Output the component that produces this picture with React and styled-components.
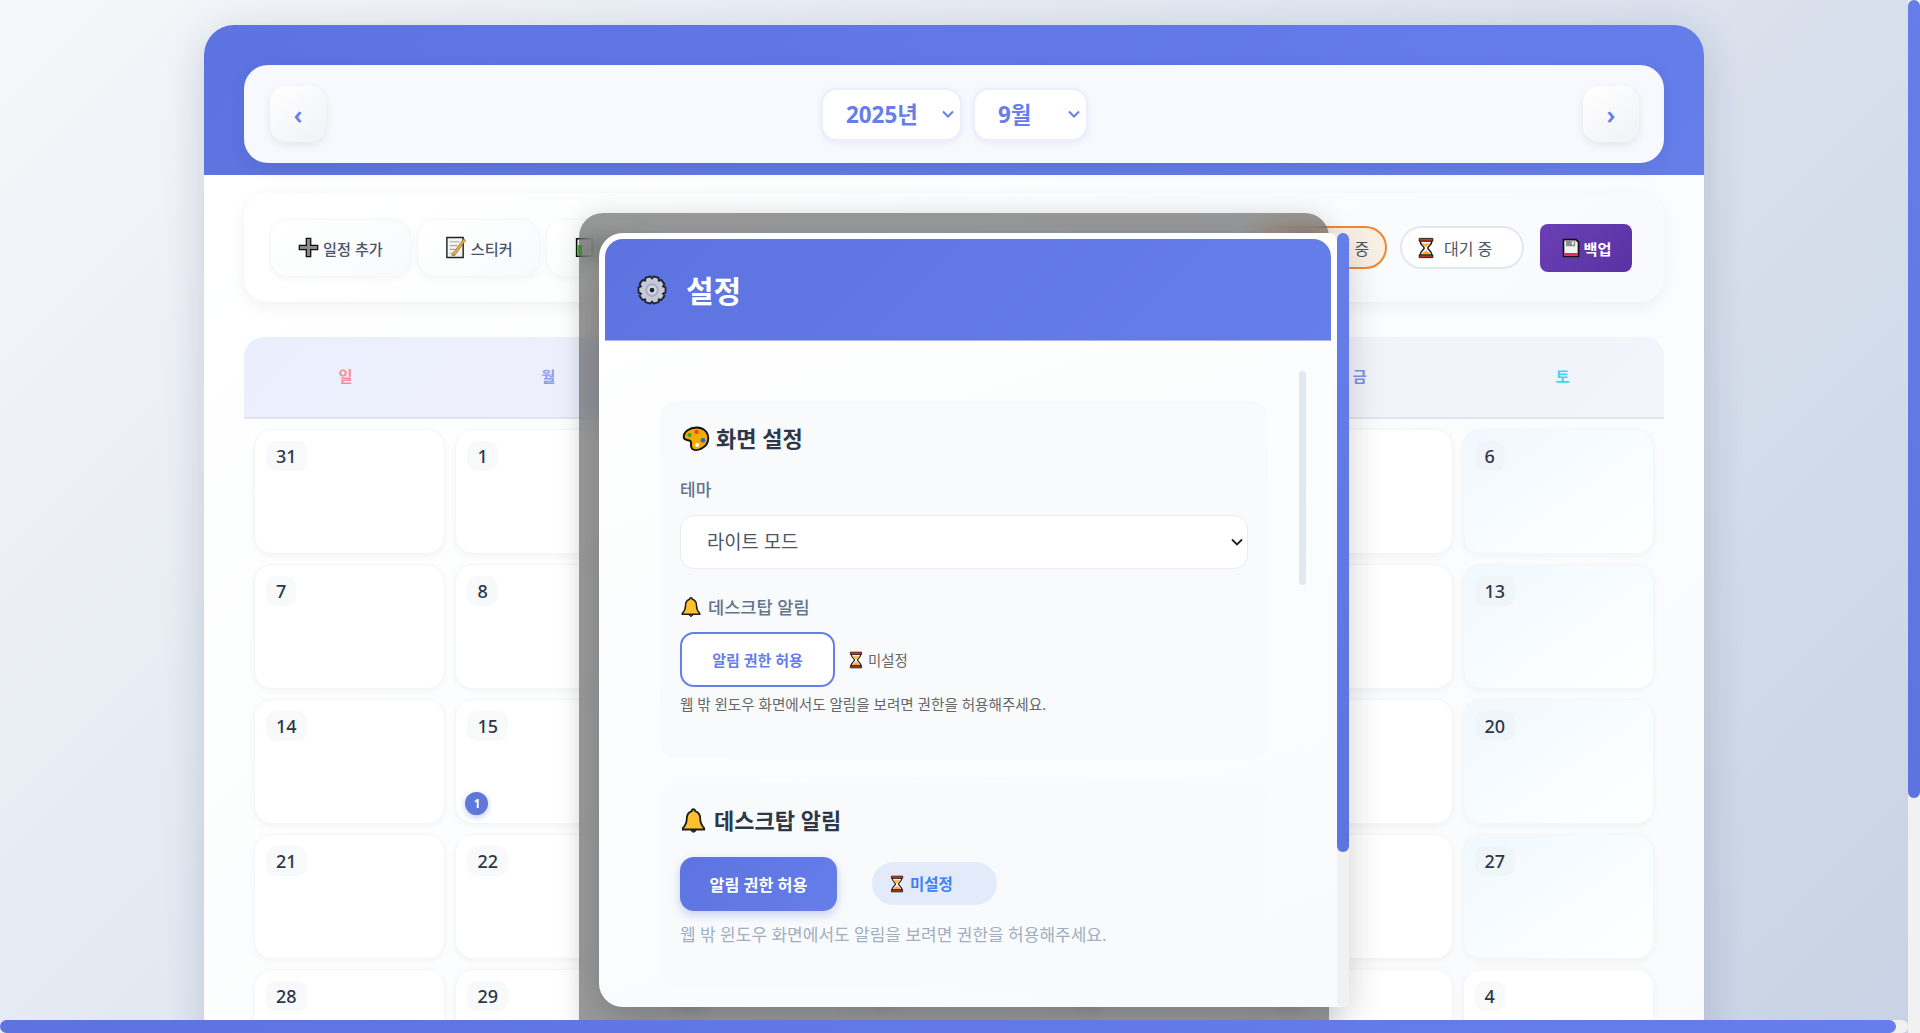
import React from "react";
import styled, { createGlobalStyle } from "styled-components";

const GlobalStyle = createGlobalStyle`
  html, body {
    margin: 0;
    overflow: hidden;
  }

  body {
    font-family: "Noto Sans", "Noto Sans CJK KR", sans-serif;
    color: #2d3748;
  }
`;

const chevron = (color, weight) =>
  `url("data:image/svg+xml,%3Csvg xmlns='http://www.w3.org/2000/svg' viewBox='0 0 12 8'%3E%3Cpath d='M1 1.500l5 5 5-5' fill='none' stroke='${color}' stroke-width='${weight}'/%3E%3C/svg%3E")`;

const Root = styled.div`
  position: relative;
  width: 1920px;
  height: 1033px;
  overflow: hidden;
  background: #f1f1f1;
`;

const Page = styled.div`
  position: relative;
  width: 1908px;
  height: 1304px;
  box-sizing: border-box;
  padding-top: 25px;
  background: linear-gradient(135deg, #f5f7fa 0%, #c3cfe2 100%);
`;

const Container = styled.div`
  width: 1500px;
  height: 100%;
  margin: 0 auto;
  border-radius: 30px 30px 0 0;
  overflow: hidden;
  background: linear-gradient(135deg, #ffffff, #f8fafc);
  box-shadow: 0 10px 40px rgba(30, 41, 80, 0.18);
`;

const Header = styled.header`
  height: 150px;
  box-sizing: border-box;
  padding: 40px 40px 12px;
  background: linear-gradient(135deg, #5c73e0, #667eea);
`;

const HeaderPanel = styled.div`
  height: 98px;
  box-sizing: border-box;
  padding: 0 25px 0 26px;
  display: flex;
  align-items: center;
  justify-content: space-between;
  border-radius: 24px;
  background: #f8f9fe;
  box-shadow: 0 4px 16px rgba(40, 50, 120, 0.12);
`;

const NavButton = styled.button`
  width: 56px;
  height: 56px;
  border: 0;
  border-radius: 16px;
  padding: 0;
  font-family: "Noto Sans", sans-serif;
  font-size: 26px;
  font-weight: 600;
  color: #667eea;
  background: linear-gradient(145deg, #ffffff, #f1f2f5);
  box-shadow: 0 3px 8px rgba(0, 0, 0, 0.08);
`;

const DatePickers = styled.div`
  display: flex;
  gap: 11px;
`;

const DateSelect = styled.select`
  appearance: none;
  width: ${(p) => p.$width}px;
  height: 53px;
  box-sizing: border-box;
  padding: 0 4px 0 23px;
  border: 2px solid #eceefb;
  border-radius: 16px;
  background: #fff ${chevron("%23667eea", 2)} no-repeat right 6px center / 12px 8px;
  font-family: inherit;
  font-size: 22.4px;
  font-weight: 700;
  color: #667eea;
  box-shadow: 0 2px 6px rgba(102, 126, 234, 0.12);
`;

const Content = styled.main`
  padding: 18px 40px 0;
`;

const Toolbar = styled.div`
  height: 109px;
  box-sizing: border-box;
  padding: 0 32px 0 26px;
  display: flex;
  align-items: center;
  border-radius: 24px;
  background: linear-gradient(135deg, #ffffff, #f8fafc);
  box-shadow: 0 4px 16px rgba(0, 0, 0, 0.06);
`;

const ToolGroup = styled.div`
  display: flex;
  gap: 6px;
`;

const ToolButton = styled.button`
  height: 58px;
  padding: 0 ${(p) => p.$padding}px;
  display: flex;
  align-items: center;
  gap: 4px;
  border: 1px solid #f5f6f7;
  border-radius: 18px;
  background: linear-gradient(145deg, #ffffff, #f8fafb);
  font-family: inherit;
  font-size: 15.2px;
  font-weight: 500;
  color: #4a5568;
  box-shadow: 0 2px 6px rgba(0, 0, 0, 0.04);
`;

const StatusGroup = styled.div`
  margin-left: auto;
  display: flex;
  align-items: center;
  gap: 13px;
`;

const StatusPill = styled.div`
  width: ${(p) => p.$width}px;
  height: 43px;
  box-sizing: border-box;
  padding-left: ${(p) => p.$padding}px;
  display: flex;
  align-items: center;
  gap: 7px;
  border: 2px solid ${(p) => (p.$active ? "#ed8936" : "#e2e8f0")};
  border-radius: 22px;
  background: ${(p) => (p.$active ? "#f9efe2" : "#fff")};
  font-size: 16px;
  color: #4a5568;
`;

const BackupButton = styled.button`
  width: 92px;
  height: 48px;
  margin-left: 3px;
  display: flex;
  align-items: center;
  justify-content: center;
  gap: 3px;
  padding: 0;
  border: 0;
  border-radius: 8px;
  background: linear-gradient(135deg, #6b3fb5, #5a32a3);
  font-family: inherit;
  font-size: 15.2px;
  font-weight: 700;
  color: #fff;
`;

const Calendar = styled.section`
  margin-top: 35px;
`;

const WeekHeader = styled.div`
  height: 82px;
  padding-bottom: 4px;
  box-sizing: border-box;
  display: grid;
  grid-template-columns: repeat(7, 1fr);
  align-items: center;
  border-radius: 20px 20px 0 0;
  border-bottom: 2px solid #e2e4ec;
  background: linear-gradient(135deg, #ebeefc, #f4f5fb);
`;

const WeekDay = styled.div`
  text-align: center;
  font-size: 15.2px;
  font-weight: 600;
  color: ${(p) => p.$color};
`;

const DayGrid = styled.div`
  padding: 10px;
  display: grid;
  grid-template-columns: repeat(7, 1fr);
  grid-auto-rows: 125px;
  gap: 10px;
`;

const DayCell = styled.div`
  position: relative;
  box-sizing: border-box;
  padding: 11px;
  border: 1px solid #f5f6f7;
  border-radius: 18px;
  background: ${(p) =>
    p.$weekend ? "linear-gradient(145deg, #f0f9ff, #ffffff)" : "#fff"};
  box-shadow: 0 2px 6px rgba(0, 0, 0, 0.04);
`;

const DayNumber = styled.span`
  display: inline-block;
  height: 30px;
  padding: 0 10px;
  border-radius: 10px;
  background: ${(p) => (p.$weekend ? "#f0f5fa" : "#f8f9fa")};
  font-size: 18px;
  font-weight: 500;
  line-height: 30px;
  color: #2d3748;
`;

const EventBadge = styled.span`
  position: absolute;
  left: 9px;
  bottom: 8px;
  width: 23px;
  height: 23px;
  display: flex;
  align-items: center;
  justify-content: center;
  border-radius: 50%;
  background: #5f77d8;
  font-size: 11.5px;
  font-weight: 700;
  color: #fff;
  box-shadow: 0 2px 6px rgba(95, 119, 216, 0.4);
`;

const Backdrop = styled.div`
  position: absolute;
  top: 213px;
  left: 50%;
  width: 750px;
  height: 900px;
  margin-left: -375px;
  border-radius: 24px;
  background: rgba(0, 0, 0, 0.4);
  backdrop-filter: blur(10px);
  box-shadow: 0 0 24px rgba(0, 0, 0, 0.12);
`;

const Modal = styled.div`
  position: absolute;
  top: 20px;
  left: 20px;
  width: 750px;
  height: 774px;
  display: flex;
  border-radius: 24px 6px 6px 24px;
  box-shadow: 0 12px 36px rgba(0, 0, 0, 0.18);
`;

const ModalPanel = styled.div`
  flex: 1;
  min-width: 0;
  padding: 6px 6px 0;
  overflow: hidden;
  border-radius: 24px 8px 0 24px;
  background: linear-gradient(160deg, #ffffff, #f8fafc);
`;

const ScrollTrack = styled.div`
  flex: none;
  width: 12px;
  height: 100%;
  border-radius: 6px;
  background: #f1f1f1;
`;

const ScrollThumb = styled.div`
  width: 100%;
  height: ${(p) => p.$length}px;
  border-radius: 6px;
  background: linear-gradient(135deg, #667eea, #5c73e0);
`;

const PageScrollY = styled.div`
  position: absolute;
  top: 0;
  right: 0;
  width: 12px;
  height: 1020px;
  border-radius: 0 0 6px 6px;
  background: #f1f1f1;
`;

const PageScrollX = styled.div`
  position: absolute;
  left: 0;
  bottom: 0;
  width: 1908px;
  height: 13px;
  border-radius: 6px;
  background: #f1f1f1;
`;

const PageScrollXThumb = styled.div`
  width: 1896px;
  height: 100%;
  border-radius: 7px;
  background: linear-gradient(90deg, #5c73e0, #667eea);
`;

const ModalHeader = styled.div`
  height: 102px;
  box-sizing: border-box;
  padding: 0 0 2px 32px;
  display: flex;
  align-items: center;
  gap: 19px;
  border-radius: 18px 18px 0 0;
  border-bottom: 1px solid #a9b6f2;
  background: linear-gradient(135deg, #5c73e0, #667eea);
`;

const ModalTitle = styled.h2`
  margin: 0;
  font-size: 30px;
  font-weight: 700;
  color: #fff;
`;

const ModalBody = styled.div`
  position: relative;
  height: 794px;
  margin: 30px 25px 0;
  padding: 30px 38px 0 30px;
  box-sizing: border-box;
`;

const BodyThumb = styled.div`
  position: absolute;
  top: 0;
  right: 0;
  width: 7px;
  height: 214px;
  border-radius: 4px;
  background: #e2e8f0;
`;

const Section = styled.section`
  padding: ${(p) => p.$padding};
  margin-bottom: 25px;
  border-radius: 16px;
  background: #f8fafc;
`;

const SectionTitle = styled.h3`
  margin: 0 0 22px;
  display: flex;
  align-items: center;
  gap: ${(p) => p.$gap}px;
  font-size: 22px;
  font-weight: 600;
  line-height: 30px;
  color: #2d3748;
`;

const FieldLabel = styled.div`
  margin: ${(p) => p.$top}px 0 13px;
  display: flex;
  align-items: center;
  gap: 6px;
  font-size: ${(p) => p.$size}px;
  font-weight: 500;
  line-height: 24px;
  color: #64748b;
`;

const ThemeSelect = styled.select`
  appearance: none;
  width: 100%;
  height: 54px;
  padding: 0 8px 0 26px;
  box-sizing: border-box;
  border: 1px solid #e9edf3;
  border-radius: 14px;
  background: #fff ${chevron("%23222", 1.8)} no-repeat right 4px center / 12px 8px;
  font-family: inherit;
  font-size: 18.8px;
  color: #4a5568;
`;

const PermissionRow = styled.div`
  display: flex;
  align-items: center;
  gap: ${(p) => p.$gap}px;
`;

const OutlineButton = styled.button`
  width: 155px;
  height: 55px;
  padding: 0;
  border: 2px solid #667eea;
  border-radius: 14px;
  background: #fff;
  font-family: inherit;
  font-size: 15px;
  font-weight: 600;
  color: #667eea;
`;

const FilledButton = styled.button`
  width: 157px;
  height: 54px;
  padding: 0;
  border: 0;
  border-radius: 14px;
  background: linear-gradient(135deg, #5c73e0, #667eea);
  font-family: inherit;
  font-size: 16.2px;
  font-weight: 600;
  color: #fff;
  box-shadow: 0 4px 10px rgba(90, 111, 220, 0.3);
`;

const PlainStatus = styled.div`
  display: flex;
  align-items: center;
  gap: 3px;
  font-size: 14.4px;
  color: #666;
`;

const StatusBadge = styled.div`
  width: 125px;
  height: 43px;
  margin-top: -1px;
  box-sizing: border-box;
  padding-left: 16px;
  display: flex;
  align-items: center;
  gap: 4px;
  border-radius: 22px;
  background: #e3eaf9;
  font-size: 15.5px;
  font-weight: 600;
  color: #3b82f6;
`;

const HelpText = styled.p`
  margin: ${(p) => p.$top}px 0 0;
  font-size: ${(p) => p.$size}px;
  line-height: 22px;
  color: ${(p) => p.$color};
`;

const IconSlot = styled.span`
  display: flex;
  margin: ${(p) => p.$top || 0}px 0 0 ${(p) => p.$left || 0}px;
`;

const Svg = ({ size, children }) => (
  <svg width={size} height={size} viewBox="0 0 24 24" style={{ flex: "none" }}>
    {children}
  </svg>
);

const PlusIcon = () => (
  <Svg size={21}>
    <path
      d="M9.500 1.500h5v8h8v5h-8v8h-5v-8h-8v-5h8z"
      fill="#8a8a8a"
      stroke="#111"
      strokeWidth="1.500"
    />
  </Svg>
);

const MemoIcon = () => (
  <Svg size={23}>
    <path d="M3 1.500h17v21H3z" fill="#f4f4f2" stroke="#222" strokeWidth="1.500" />
    <path d="M6 6h10M6 10h8M6 14h6M6 18h4" stroke="#a8a8a8" strokeWidth="1.200" />
    <path d="M8 20 20.500 3l2 1.500L11 20.500z" fill="#f9b233" stroke="#444" strokeWidth="0.600" />
  </Svg>
);

const ChartIcon = () => (
  <Svg size={21}>
    <path d="M3 2h18v20H3z" fill="#f4f4f2" stroke="#111" strokeWidth="1.800" />
    <path d="M4.500 9h5v12h-5z" fill="#3fb52f" />
  </Svg>
);

const HourglassIcon = ({ size }) => (
  <Svg size={size}>
    <path d="M5.500 4h13c0 5-4.500 6-4.500 8s4.500 3 4.500 8h-13c0-5 4.500-6 4.500-8S5.500 9 5.500 4z" fill="#f4f1ea" stroke="#1a1a1a" strokeWidth="1.600" />
    <path d="M7.500 7h9c-1 2-3.500 3-4.500 4-1-1-3.500-2-4.500-4z" fill="#fbb732" />
    <path d="M7.500 19c.5-2 3-3 4.500-4 1.500 1 4 2 4.500 4z" fill="#f7a823" />
    <path d="M4.500 1.500h15v3h-15z" fill="#e2321c" stroke="#1a1a1a" strokeWidth="1" />
    <path d="M4.500 19.500h15v3h-15z" fill="#b5301e" stroke="#1a1a1a" strokeWidth="1" />
  </Svg>
);

const FloppyIcon = () => (
  <Svg size={20}>
    <path d="M3 2h15l3 3v17H3z" fill="#f2f2f2" stroke="#111" strokeWidth="2" />
    <path d="M6 3h11v7H6z" fill="#8c8c8c" />
    <path d="M13 4h2.500v4H13z" fill="#e8e8e8" />
    <path d="M4 18h16v3H4z" fill="#e0245e" />
  </Svg>
);

// toothed outline around the centre of a 24 box
const gearPath = () => {
  const pts = [];
  const teeth = 10;
  const step = (Math.PI * 2) / teeth;
  for (let i = 0; i < teeth; i++) {
    const a = i * step;
    [
      [9.2, -0.5],
      [11, -0.3],
      [11, 0.3],
      [9.2, 0.5],
    ].forEach(([r, k]) => {
      const t = a + k * step;
      pts.push(`${(12 + r * Math.cos(t)).toFixed(2)} ${(12 + r * Math.sin(t)).toFixed(2)}`);
    });
  }
  return `M${pts.join("L")}z`;
};

const GearIcon = () => (
  <Svg size={30}>
    <path d={gearPath()} fill="#c6cad8" stroke="#1f2433" strokeWidth="1.500" strokeLinejoin="round" />
    <circle cx="12" cy="12" r="5.500" fill="#a9aec2" />
    <circle cx="12" cy="12" r="3.800" fill="#d6d9e4" />
    <circle cx="12" cy="12" r="1.900" fill="#1f2433" />
  </Svg>
);

const PaletteIcon = () => (
  <Svg size={28}>
    <path
      d="M12.500 3C6.500 3 1.500 6.500 1.500 11c0 3.500 4 2.500 5.500 3.500 2 1.300-.5 4 1.500 6.500 1.500 1.800 5 1.800 8 .2 3.500-1.800 6-5.300 6-9C22.500 6.500 18 3 12.500 3z"
      fill="#f5ab00"
      stroke="#111"
      strokeWidth="1.700"
    />
    <circle cx="6.500" cy="9.500" r="1.800" fill="#2fa83a" />
    <circle cx="12.500" cy="6.800" r="1.800" fill="#e8452c" />
    <circle cx="18" cy="14" r="2" fill="#2467d6" />
    <circle cx="13" cy="18" r="1.700" fill="#fff" />
  </Svg>
);

const BellIcon = ({ size }) => (
  <Svg size={size}>
    <path
      d="M12 2c-.9 0-1.500.7-1.500 1.600C7.500 4.500 6 7.500 6 10.500c0 4-1.200 6-3.500 8.300V20h19v-1.200C19.200 16.500 18 14.500 18 10.500c0-3-1.500-6-4.500-6.900C13.500 2.700 12.900 2 12 2z"
      fill="#fdc02f"
      stroke="#1c1c1c"
      strokeWidth="1.600"
    />
    <path d="M10 20.500c.3 1.200 1 1.800 2 1.800s1.700-.6 2-1.800z" fill="#7a5a10" stroke="#1c1c1c" strokeWidth="1" />
  </Svg>
);

const weekDays = [
  { label: "일", color: "#ff8a93" },
  { label: "월", color: "#8c9cf0" },
  { label: "화", color: "#8c9cf0" },
  { label: "수", color: "#8c9cf0" },
  { label: "목", color: "#8c9cf0" },
  { label: "금", color: "#8090e4" },
  { label: "토", color: "#3fd6f2" },
];

const buildDays = () => {
  const days = [31];
  for (let d = 1; d <= 30; d++) days.push(d);
  for (let d = 1; d <= 4; d++) days.push(d);
  return days;
};

export default function App() {
  const days = buildDays();

  return (
    <Root>
      <GlobalStyle />
      <Page>
        <Container>
          <Header>
            <HeaderPanel>
              <NavButton>‹</NavButton>
              <DatePickers>
                <DateSelect $width={141} defaultValue="2025">
                  <option value="2025">2025년</option>
                </DateSelect>
                <DateSelect $width={115} defaultValue="9">
                  <option value="9">9월</option>
                </DateSelect>
              </DatePickers>
              <NavButton>›</NavButton>
            </HeaderPanel>
          </Header>

          <Content>
            <Toolbar>
              <ToolGroup>
                <ToolButton $padding={27}>
                  <PlusIcon /> 일정 추가
                </ToolButton>
                <ToolButton $padding={26}>
                  <MemoIcon /> 스티커
                </ToolButton>
                <ToolButton $padding={27}>
                  <ChartIcon /> 통계
                </ToolButton>
              </ToolGroup>
              <StatusGroup>
                <StatusPill $active $width={130} $padding={33}>
                  <HourglassIcon size={22} /> 진행 중
                </StatusPill>
                <StatusPill $width={124} $padding={13}>
                  <HourglassIcon size={22} /> 대기 중
                </StatusPill>
                <BackupButton>
                  <FloppyIcon /> 백업
                </BackupButton>
              </StatusGroup>
            </Toolbar>

            <Calendar>
              <WeekHeader>
                {weekDays.map((w) => (
                  <WeekDay key={w.label} $color={w.color}>
                    {w.label}
                  </WeekDay>
                ))}
              </WeekHeader>
              <DayGrid>
                {days.map((d, i) => {
                  const weekend = i % 7 === 6 && i < 28;
                  return (
                    <DayCell key={i} $weekend={weekend}>
                      <DayNumber $weekend={weekend}>{d}</DayNumber>
                      {i === 15 && <EventBadge>1</EventBadge>}
                    </DayCell>
                  );
                })}
              </DayGrid>
            </Calendar>
          </Content>
        </Container>

        <Backdrop>
          <Modal>
            <ModalPanel>
              <ModalHeader>
                <IconSlot $top={3}>
                  <GearIcon />
                </IconSlot>
                <ModalTitle>설정</ModalTitle>
              </ModalHeader>
              <ModalBody>
                <BodyThumb />
                <Section $padding="22px 20px 43px">
                  <SectionTitle $gap={6}>
                    <IconSlot $left={2}>
                      <PaletteIcon />
                    </IconSlot>
                    화면 설정
                  </SectionTitle>
                  <FieldLabel $top={25} $size={17}>
                    테마
                  </FieldLabel>
                  <ThemeSelect defaultValue="light">
                    <option value="light">라이트 모드</option>
                    <option value="dark">다크 모드</option>
                  </ThemeSelect>
                  <FieldLabel $top={26} $size={17.6}>
                    <BellIcon size={22} /> 데스크탑 알림
                  </FieldLabel>
                  <PermissionRow $gap={12}>
                    <OutlineButton>알림 권한 허용</OutlineButton>
                    <PlainStatus>
                      <HourglassIcon size={18} /> 미설정
                    </PlainStatus>
                  </PermissionRow>
                  <HelpText $top={6} $size={14.6} $color="#666">
                    웹 밖 윈도우 화면에서도 알림을 보려면 권한을 허용해주세요.
                  </HelpText>
                </Section>

                <Section $padding="22px 20px 40px">
                  <SectionTitle $gap={7}>
                    <BellIcon size={27} /> 데스크탑 알림
                  </SectionTitle>
                  <PermissionRow $gap={35}>
                    <FilledButton>알림 권한 허용</FilledButton>
                    <StatusBadge>
                      <HourglassIcon size={18} /> 미설정
                    </StatusBadge>
                  </PermissionRow>
                  <HelpText $top={13} $size={17} $color="#a0aec0">
                    웹 밖 윈도우 화면에서도 알림을 보려면 권한을 허용해주세요.
                  </HelpText>
                </Section>
              </ModalBody>
            </ModalPanel>
            <ScrollTrack>
              <ScrollThumb $length={619} />
            </ScrollTrack>
          </Modal>
        </Backdrop>
      </Page>

      <PageScrollY>
        <ScrollThumb $length={798} />
      </PageScrollY>
      <PageScrollX>
        <PageScrollXThumb />
      </PageScrollX>
    </Root>
  );
}
